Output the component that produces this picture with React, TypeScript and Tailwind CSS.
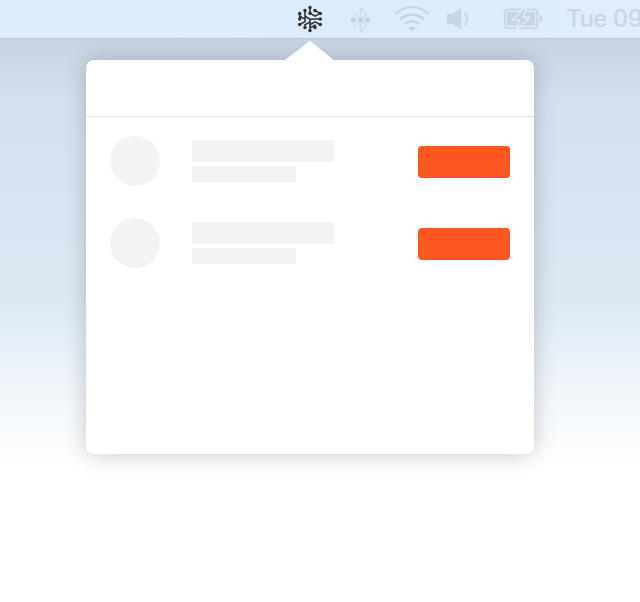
import React from "react";

function NetworkIcon() {
  const nodes = [
    [16, 4.6], [11, 7.6], [21, 7.6], [5.7, 10.4], [26.3, 10.4], [5.7, 16],
    [26.3, 16], [5.7, 21.5], [26.3, 21.5], [11, 24.5], [21, 24.5], [16, 27.4], [16, 10.3],
  ];
  return (
    <svg className="h-8 w-8 shrink-0 text-[#303235]" viewBox="0 0 32 32" fill="none" stroke="currentColor" strokeWidth="1.6">
      <path d="M16 4.6v5.7l5.1 2.9 5.2-2.8M21 7.6l5.3 2.8M11 7.6v11l-5.3 2.9M5.7 10.4V16M5.7 13.2l5.3 2.9M11 13.2l5 3 5-.2h5.3M16 16.2v11.2M16 21.7l5-2.9 5.3 2.7M11 24.5v-2.8l5-2.8M21 24.5v-2.2l-5 2.6" />
      {nodes.map(([x, y]) => <circle key={`${x}-${y}`} cx={x} cy={y} r="1.75" fill="currentColor" stroke="none" />)}
    </svg>
  );
}

function BluetoothIcon() {
  return (
    <svg className="ml-[22px] h-8 w-6 shrink-0" viewBox="0 0 24 32" fill="none">
      <path d="m5.5 10 13 12L12.5 28.5V4.5l6.5 6.5-13.5 12" stroke="#cfdde9" strokeWidth="1.6" />
      <g fill="#c4d2df"><circle cx="5.3" cy="16.7" r="2.6" /><circle cx="12.3" cy="16.7" r="2.6" /><circle cx="19.3" cy="16.7" r="2.6" /></g>
    </svg>
  );
}

function WifiIcon() {
  return (
    <svg className="ml-5 h-8 w-10 shrink-0" viewBox="0 0 40 32" fill="none" stroke="#c9d6e2" strokeWidth="2.3">
      <path d="M3 11.2Q20-3.5 37 11.2M8 16.5q12-10 24 0M13 21q7-5.8 14 0" />
      <path d="M16.7 24.4q3.3-2 6.6 0v1.2L20 28.4l-3.3-2.8Z" fill="#c7d4e1" stroke="none" />
    </svg>
  );
}

function VolumeIcon() {
  return (
    <svg className="ml-[13px] h-8 w-7 shrink-0" viewBox="0 0 28 32" fill="#c7d4e1">
      <path d="M3.3 10.7h4.2L16 5.3v21L7.5 21H3.3Q2 21 2 19.7V12q0-1.3 1.3-1.3Z" />
      <path d="M19.5 9.8q5.5 6 0 12.2" fill="none" stroke="#c9d6e2" strokeWidth="2" />
    </svg>
  );
}

function BatteryIcon() {
  return (
    <svg className="ml-[29px] h-8 w-[43px] shrink-0" viewBox="0 0 43 32">
      <rect x="2.8" y="6.4" width="32.5" height="18.8" rx="3" fill="none" stroke="#c9d6e2" strokeWidth="2" />
      <rect x="5" y="8.8" width="28" height="14" rx="1" fill="#c7d4e1" />
      <path d="M21.7 5.3 10.5 17h6.7l-2.7 10L27.8 14.2h-6.5L24.5 5.3Z" fill="#c7d4e1" stroke="#deecf9" strokeWidth="1.5" />
      <path d="M37.6 11.5q6.4 4.4 0 8.8Z" fill="#c7d4e1" />
    </svg>
  );
}

function PlaceholderRow() {
  return (
    <div className="flex h-[50px] items-start">
      <div className="h-[50px] w-[50px] rounded-full bg-[#f3f3f3]" />
      <div className="ml-8 mt-1 flex flex-col gap-1">
        <div className="h-[22px] w-[142px] bg-[#f3f3f3]" />
        <div className="h-4 w-[104px] bg-[#f3f3f3]" />
      </div>
      <button aria-label="Action" className="ml-auto mt-[10px] h-8 w-[92px] rounded bg-[#ff5722]" />
    </div>
  );
}

export default function App() {
  return (
    <main className="h-[602px] w-[640px] overflow-hidden bg-[linear-gradient(180deg,#c8d4e1_0px,#c8d4e1_42px,#cddae8_72px,#d3e1f0_105px,#d6e4f1_180px,#dce8f4_300px,#e8f0f8_350px,#f3f7fc_400px,#ffffff_470px)]">
      <header className="flex h-[39px] items-start overflow-hidden border-b border-[#b9c7d6] bg-[linear-gradient(90deg,#ddedfc,#dcecfb_50%,#e0eefb)] pl-[294px] pt-[3px]">
        <NetworkIcon />
        <BluetoothIcon />
        <WifiIcon />
        <VolumeIcon />
        <BatteryIcon />
        <span className="ml-[21px] shrink-0 whitespace-nowrap font-['Inter',sans-serif] text-[24px] font-medium leading-8 tracking-[-0.5px] text-[#c9d6e3]">Tue 09</span>
      </header>
      <section className="relative ml-[86px] mt-[21px] h-[394px] w-[448px] rounded-lg bg-white shadow-[0_0_22px_rgba(0,0,0,0.21)]">
        <svg className="absolute -top-[19px] left-[198px] h-5 w-[52px]" viewBox="0 0 52 20">
          <path d="M0 20 2 18.2 24.5 1q1.5-1.2 3 0L49 18.5l1.5 1.5Z" fill="white" />
        </svg>
        <div className="h-[57px] border-b border-[#e4e5e6]" />
        <div className="flex flex-col gap-8 px-6 pt-[19px]">
          <PlaceholderRow />
          <PlaceholderRow />
        </div>
      </section>
    </main>
  );
}
